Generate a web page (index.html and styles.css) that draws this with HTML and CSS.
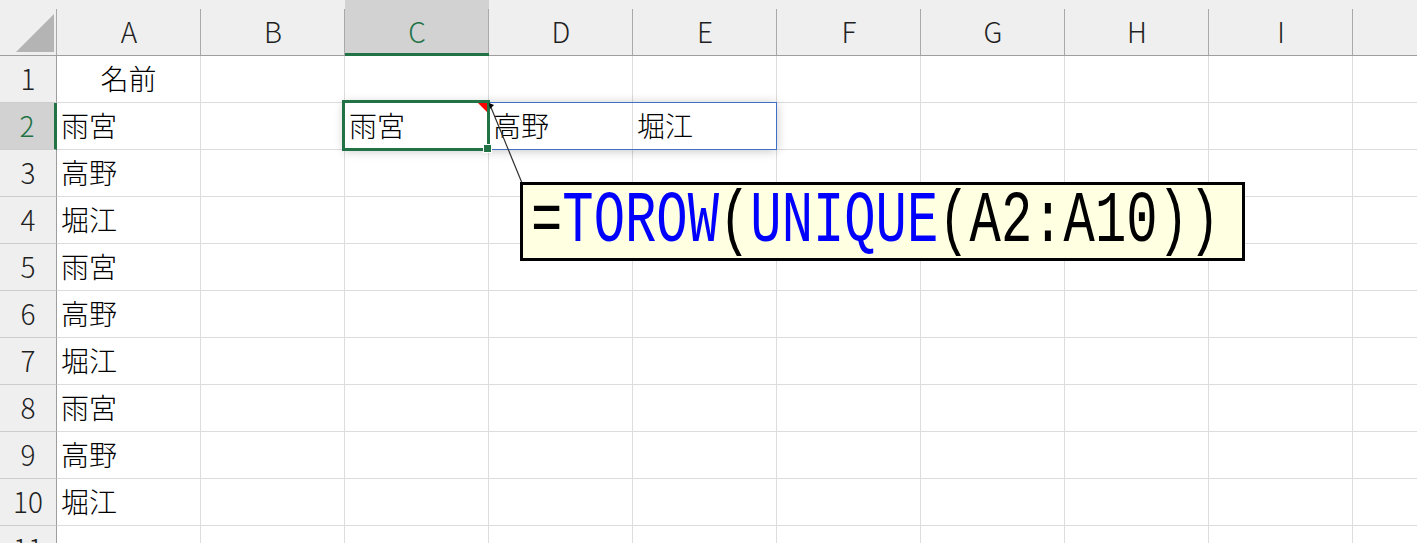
FILE: index.html
```html
<!DOCTYPE html>
<html lang="ja">
<head>
<meta charset="utf-8">
<title>TOROW UNIQUE</title>
<link rel="stylesheet" href="styles.css">
</head>
<body>
<div class="sheet">
  <div class="grid">
    <div class="ch corner"><svg width="38" height="38" viewBox="0 0 38 38"><polygon points="38,0 38,38 0,38" fill="#b4b4b4"/></svg></div>
    <div class="ch">A</div><div class="ch">B</div><div class="ch sel-col">C</div><div class="ch">D</div><div class="ch">E</div><div class="ch">F</div><div class="ch">G</div><div class="ch">H</div><div class="ch">I</div><div class="ch"></div>

    <div class="rh">1</div><div class="c center">名前</div><div class="c"></div><div class="c"></div><div class="c"></div><div class="c"></div><div class="c"></div><div class="c"></div><div class="c"></div><div class="c"></div><div class="c"></div>
    <div class="rh sel-row">2</div><div class="c">雨宮</div><div class="c"></div><div class="c">雨宮</div><div class="c">高野</div><div class="c">堀江</div><div class="c"></div><div class="c"></div><div class="c"></div><div class="c"></div><div class="c"></div>
    <div class="rh">3</div><div class="c">高野</div><div class="c"></div><div class="c"></div><div class="c"></div><div class="c"></div><div class="c"></div><div class="c"></div><div class="c"></div><div class="c"></div><div class="c"></div>
    <div class="rh">4</div><div class="c">堀江</div><div class="c"></div><div class="c"></div><div class="c"></div><div class="c"></div><div class="c"></div><div class="c"></div><div class="c"></div><div class="c"></div><div class="c"></div>
    <div class="rh">5</div><div class="c">雨宮</div><div class="c"></div><div class="c"></div><div class="c"></div><div class="c"></div><div class="c"></div><div class="c"></div><div class="c"></div><div class="c"></div><div class="c"></div>
    <div class="rh">6</div><div class="c">高野</div><div class="c"></div><div class="c"></div><div class="c"></div><div class="c"></div><div class="c"></div><div class="c"></div><div class="c"></div><div class="c"></div><div class="c"></div>
    <div class="rh">7</div><div class="c">堀江</div><div class="c"></div><div class="c"></div><div class="c"></div><div class="c"></div><div class="c"></div><div class="c"></div><div class="c"></div><div class="c"></div><div class="c"></div>
    <div class="rh">8</div><div class="c">雨宮</div><div class="c"></div><div class="c"></div><div class="c"></div><div class="c"></div><div class="c"></div><div class="c"></div><div class="c"></div><div class="c"></div><div class="c"></div>
    <div class="rh">9</div><div class="c">高野</div><div class="c"></div><div class="c"></div><div class="c"></div><div class="c"></div><div class="c"></div><div class="c"></div><div class="c"></div><div class="c"></div><div class="c"></div>
    <div class="rh">10</div><div class="c">堀江</div><div class="c"></div><div class="c"></div><div class="c"></div><div class="c"></div><div class="c"></div><div class="c"></div><div class="c"></div><div class="c"></div><div class="c"></div>
    <div class="rh">11</div><div class="c"></div><div class="c"></div><div class="c"></div><div class="c"></div><div class="c"></div><div class="c"></div><div class="c"></div><div class="c"></div><div class="c"></div><div class="c"></div>
  </div>

  <div class="spill"></div>
  <div class="selection"></div>
  <div class="handle"></div>
  <div class="comment-mark"></div>
  <svg class="pointer" width="40" height="90" viewBox="0 0 40 90">
    <line x1="3" y1="4" x2="35" y2="82" stroke="#303030" stroke-width="1.2"/>
    <polygon points="2,2 7,4 3,8" fill="#000"/>
  </svg>
  <div class="callout"><span class="formula">=<span class="fn">TOROW</span>(<span class="fn">UNIQUE</span>(A2:A10))</span></div>
</div>
</body>
</html>
```

FILE: styles.css
```css
* { box-sizing: border-box; }

body {
  margin: 0;
  background: #ffffff;
  overflow: hidden;
  font-family: "Noto Sans CJK JP", "Noto Sans", sans-serif;
}

.sheet {
  position: relative;
  width: 1417px;
  height: 543px;
  overflow: hidden;
}

.grid {
  display: grid;
  grid-template-columns: 57px repeat(10, 144px);
  grid-template-rows: 56px repeat(11, 47px);
}

.c {
  border-right: 1px solid #dcdcdc;
  border-bottom: 1px solid #dcdcdc;
  font-size: 28px;
  font-weight: 300;
  line-height: 45px;
  padding-left: 4px;
  white-space: nowrap;
  overflow: hidden;
  color: #000;
}

.c.center {
  text-align: center;
  padding-left: 0;
}

.ch {
  background: #efefef linear-gradient(#a9a9a9, #a9a9a9) no-repeat right 0 top 9px / 1px 100%;
  border-bottom: 1px solid #9e9e9e;
  font-size: 28px;
  font-weight: 300;
  line-height: 46px;
  padding-top: 8px;
  text-align: center;
  color: #1f1f1f;
}

.corner {
  display: flex;
  justify-content: flex-end;
  align-items: flex-end;
  padding: 0 3px 3px 0;
}

.ch.sel-col {
  background-color: #d2d2d2;
  color: #217346;
  border-bottom: 3px solid #217346;
}

.rh {
  background: #efefef;
  border-right: 1px solid #9e9e9e;
  border-bottom: 1px solid #cdcdcd;
  font-size: 28px;
  font-weight: 300;
  line-height: 45px;
  text-align: center;
  color: #1f1f1f;
}

.rh.sel-row {
  background: #d2d2d2;
  color: #217346;
  border-right: 3px solid #217346;
}

.spill {
  position: absolute;
  left: 344px;
  top: 102px;
  width: 433px;
  height: 48px;
  border: 1px solid #3f70c8;
  box-shadow: 0 1px 10px rgba(0, 0, 0, 0.22);
}

.selection {
  position: absolute;
  left: 342px;
  top: 100px;
  width: 148px;
  height: 51px;
  border: 3px solid #217346;
}

.handle {
  position: absolute;
  left: 483px;
  top: 144px;
  width: 9px;
  height: 9px;
  background: #217346;
  border: 1px solid #ffffff;
}

.comment-mark {
  position: absolute;
  left: 478px;
  top: 103px;
  width: 0;
  height: 0;
  border-top: 9px solid #ff0000;
  border-left: 9px solid transparent;
}

.pointer {
  position: absolute;
  left: 487px;
  top: 101px;
}

.callout {
  position: absolute;
  left: 520px;
  top: 182px;
  width: 725px;
  height: 79px;
  border: 3px solid #000;
  background: #ffffe1;
  display: flex;
  align-items: center;
  padding-left: 8px;
  overflow: hidden;
}

.formula {
  display: inline-block;
  font-family: "Liberation Mono", "DejaVu Sans Mono", monospace;
  font-size: 72px;
  line-height: 1;
  white-space: nowrap;
  color: #000;
  transform: scaleX(0.725);
  transform-origin: left center;
}

.fn {
  color: #0000ff;
}
```
